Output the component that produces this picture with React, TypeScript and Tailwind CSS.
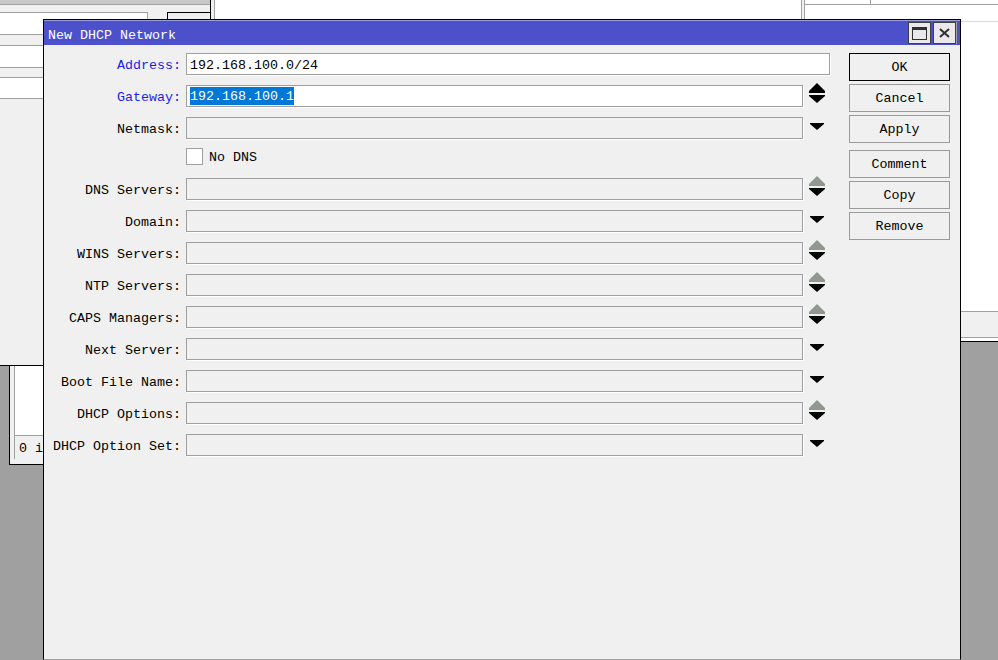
import React from "react";

type Arrow = "none" | "spin" | "spinDark" | "down";

type Field = {
  label: string;
  blue?: boolean;
  value?: string;
  selected?: boolean;
  white?: boolean;
  arrow: Arrow;
};

const fieldsTop: Field[] = [
  { label: "Address:", blue: true, value: "192.168.100.0/24", white: true, arrow: "none" },
  { label: "Gateway:", blue: true, value: "192.168.100.1", selected: true, white: true, arrow: "spinDark" },
  { label: "Netmask:", arrow: "down" },
];

const fieldsBottom: Field[] = [
  { label: "DNS Servers:", arrow: "spin" },
  { label: "Domain:", arrow: "down" },
  { label: "WINS Servers:", arrow: "spin" },
  { label: "NTP Servers:", arrow: "spin" },
  { label: "CAPS Managers:", arrow: "spin" },
  { label: "Next Server:", arrow: "down" },
  { label: "Boot File Name:", arrow: "down" },
  { label: "DHCP Options:", arrow: "spin" },
  { label: "DHCP Option Set:", arrow: "down" },
];

const SpinArrows = ({ dark }: { dark?: boolean }) => (
  <svg width="16" height="21" viewBox="0 0 16 21" className="ml-[6px] mb-[5px]">
    <polygon points="8,0 16,8 16,10 0,10 0,8" fill={dark ? "#000" : "#909890"} />
    <polygon points="0,12 16,12 16,13 8,20 0,13" fill="#000" />
  </svg>
);

const DownArrow = () => (
  <svg width="14" height="7" viewBox="0 0 14 7" className="ml-[7px] mb-[4px]">
    <polygon points="0,0 14,0 14,1 7,7 0,1" fill="#000" />
  </svg>
);

const FieldRow = ({ f }: { f: Field }) => (
  <div className="flex items-center h-[22px]">
    <div
      className={`w-[137px] shrink-0 text-right whitespace-nowrap pt-[3px] ${
        f.blue ? "text-[#1e1ee6]" : "text-black"
      }`}
    >
      {f.label}
    </div>
    <div
      className={`ml-[5px] h-[22px] border border-[#a0a0a0] shadow-[1px_1px_0_#ffffff] flex items-center pl-[3px] ${
        f.arrow === "none" ? "w-[644px]" : "w-[617px]"
      } ${f.white ? "bg-white" : "bg-[#f0f0f0]"}`}
    >
      {f.value &&
        (f.selected ? (
          <span className="bg-[#0078d7] text-white leading-[17px] pt-[1px]">{f.value}</span>
        ) : (
          <span className="text-black pt-[3px]">{f.value}</span>
        ))}
    </div>
    {f.arrow !== "none" && (
      <div className="w-[27px] h-[22px] flex items-center">
        {f.arrow === "spin" && <SpinArrows />}
        {f.arrow === "spinDark" && <SpinArrows dark />}
        {f.arrow === "down" && <DownArrow />}
      </div>
    )}
  </div>
);

const DlgButton = ({ label, primary, extra }: { label: string; primary?: boolean; extra?: string }) => (
  <button
    className={`h-[28px] w-[101px] bg-[#f0f0f0] border flex items-center justify-center pt-[2px] text-black ${
      primary ? "border-black" : "border-[#9a9a9a]"
    } ${extra ?? ""}`}
  >
    {label}
  </button>
);

export default function App() {
  return (
    <div className="relative w-[998px] h-[660px] overflow-hidden bg-[#a0a0a0] font-['Liberation_Mono',monospace] text-[13.33px]">
      {/* left background window */}
      <div className="absolute left-0 top-0 w-[211px] h-[366px] bg-[#f0f0f0] border-b border-r border-black">
        <div className="h-[5px] bg-[#c8c8c8] border-b border-[#a0a0a0]" />
        <div className="flex mt-[7px]">
          <div className="w-[148px] h-[22px] bg-white border-t border-r border-[#a0a0a0]" />
          <div className="ml-[19px] flex-1 h-[10px] border-t border-l border-black" />
        </div>
        <div className="h-[11px] border-t border-[#a0a0a0]" />
        <div className="h-[22px] bg-white border-t border-[#a0a0a0]" />
        <div className="h-[10px] border-t border-[#a0a0a0]" />
        <div className="h-[22px] bg-white border-t border-b border-[#a0a0a0]" />
      </div>

      {/* top middle window */}
      <div className="absolute left-[211px] top-0 w-[590px] h-[20px] bg-[#f0f0f0] flex">
        <div className="w-[3px]" />
        <div className="flex-1 bg-white border-l border-[#a0a0a0]" />
      </div>

      {/* right background window */}
      <div className="absolute left-[801px] top-0 w-[197px] h-[342px] bg-[#f0f0f0] border-b border-black flex">
        <div className="w-[4px] h-full border-l border-r border-[#a0a0a0]" />
        <div className="flex-1 flex flex-col">
          <div className="flex-1 bg-white flex flex-col">
            <div className="h-[5px] flex border-b border-[#a0a0a0]">
              <div className="w-[66px] border-r border-[#a0a0a0]" />
            </div>
            <div className="h-[17px] border-b border-[#dcdcdc]" />
          </div>
          <div className="h-[26px] border-t border-[#a0a0a0] bg-[#f0f0f0]" />
          <div className="h-[4px] border-t border-[#a0a0a0] bg-white" />
        </div>
      </div>

      {/* bottom left small window */}
      <div className="absolute left-[9px] top-[366px] w-[60px] h-[99px] bg-[#f0f0f0] border-l border-b border-black flex flex-col pl-[4px] pb-[5px]">
        <div className="flex-1 bg-white border-l border-[#a0a0a0]" />
        <div className="h-[24px] border-t border-l border-[#a0a0a0] flex items-center pl-[4px] pt-[3px] text-black">
          0 i
        </div>
      </div>

      {/* dialog */}
      <div className="absolute left-[43px] top-[19px] w-[918px] h-[641px] bg-[#f0f0f0] border border-black border-b-[#a0a0a0] flex flex-col">
        <div className="h-[25px] bg-[#4c50cb] border-t border-[#9a9ce0] flex items-center justify-between pl-[4px] pr-[3px]">
          <span className="text-white mt-[5px]">New DHCP Network</span>
          <div className="flex gap-[2px] border-r border-[#a0a0a0]">
            <div className="w-[23px] h-[22px] bg-[#ebe8eb] border border-[#404040] flex items-center justify-center">
              <svg width="15" height="13" viewBox="0 0 15 13">
                <rect x="0.5" y="0.5" width="14" height="12" fill="none" stroke="#303030" />
                <rect x="0" y="0" width="15" height="3" fill="#303030" />
              </svg>
            </div>
            <div className="w-[23px] h-[22px] bg-[#ebe8eb] border border-[#404040] flex items-center justify-center">
              <svg width="11" height="10" viewBox="0 0 11 10">
                <path d="M1 1 L10 9 M10 1 L1 9" stroke="#303030" strokeWidth="2" />
              </svg>
            </div>
          </div>
        </div>

        <div className="flex pt-[8px]">
          <div className="flex flex-col gap-[10px]">
            {fieldsTop.map((f) => (
              <FieldRow key={f.label} f={f} />
            ))}
            <div className="flex items-center h-[17px] -mt-[1px] mb-[3px] pl-[142px]">
              <div className="w-[17px] h-[17px] bg-white border border-[#a0a0a0]" />
              <span className="ml-[6px] pt-[3px] text-black">No DNS</span>
            </div>
            {fieldsBottom.map((f) => (
              <FieldRow key={f.label} f={f} />
            ))}
          </div>

          <div className="ml-[19px] flex flex-col gap-[3px]">
            <DlgButton label="OK" primary />
            <DlgButton label="Cancel" />
            <DlgButton label="Apply" />
            <DlgButton label="Comment" extra="mt-[4px]" />
            <DlgButton label="Copy" />
            <DlgButton label="Remove" />
          </div>
        </div>
      </div>
    </div>
  );
}
